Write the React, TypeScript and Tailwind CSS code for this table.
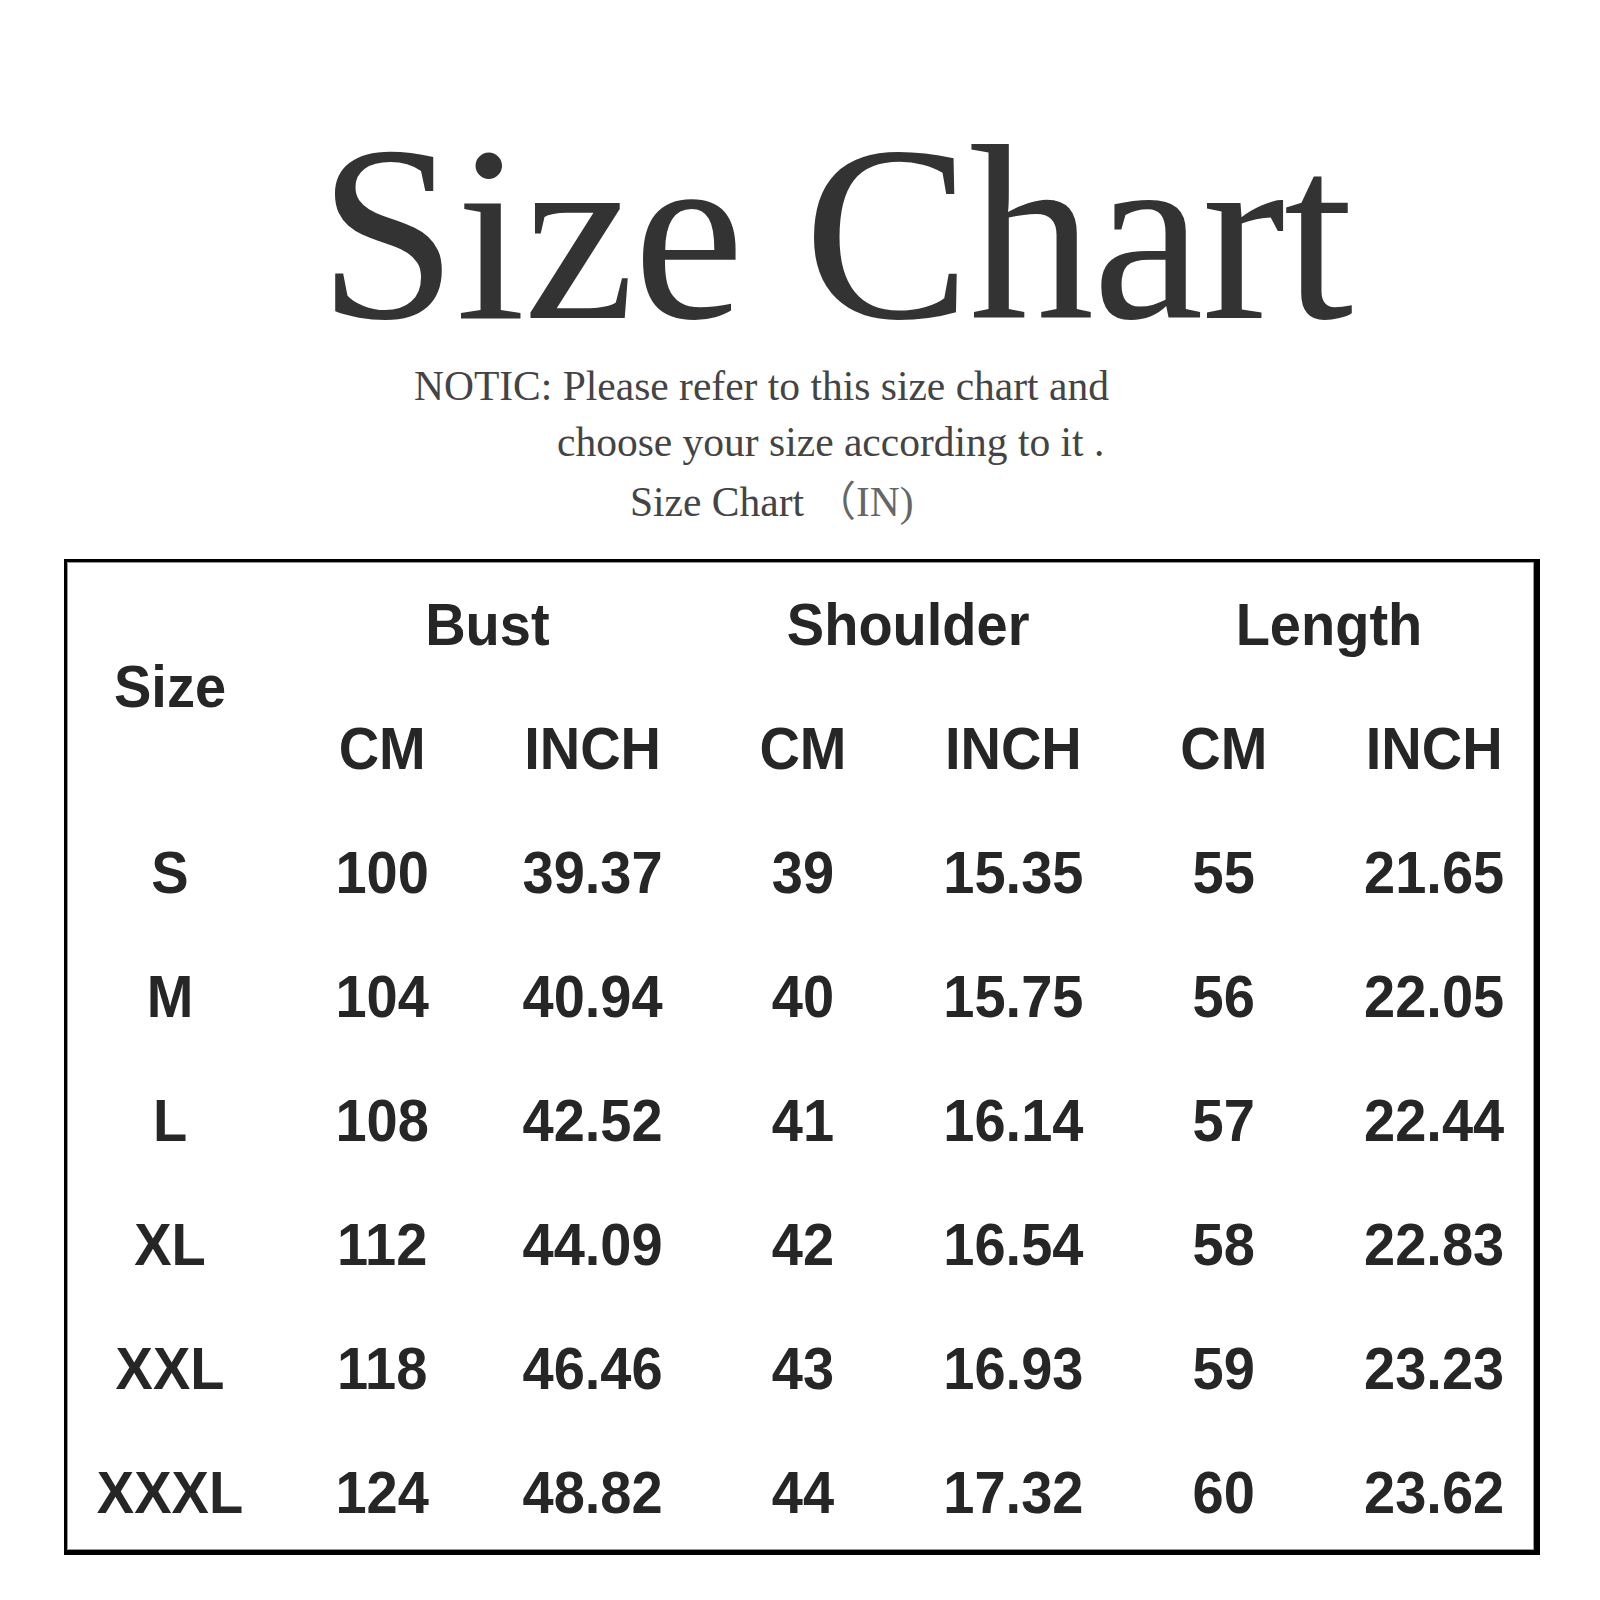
import React from 'react';

type Row = { size: string; values: string[] };

const rows: Row[] = [
  { size: 'S', values: ['100', '39.37', '39', '15.35', '55', '21.65'] },
  { size: 'M', values: ['104', '40.94', '40', '15.75', '56', '22.05'] },
  { size: 'L', values: ['108', '42.52', '41', '16.14', '57', '22.44'] },
  { size: 'XL', values: ['112', '44.09', '42', '16.54', '58', '22.83'] },
  { size: 'XXL', values: ['118', '46.46', '43', '16.93', '59', '23.23'] },
  { size: 'XXXL', values: ['124', '48.82', '44', '17.32', '60', '23.62'] },
];

const groups = ['Bust', 'Shoulder', 'Length'];

const serif = "font-['Liberation_Serif','Noto_Sans_CJK_SC',serif]";
const cell = 'flex items-center justify-center';

// taller-looking glyphs, as in the original chart image
const Txt: React.FC<{ children: React.ReactNode }> = ({ children }) => (
  <span className="inline-block scale-y-[1.06]">{children}</span>
);

const App: React.FC = () => {
  return (
    <div className="w-[1600px] h-[1600px] bg-white pt-[111px]">
      <h1
        className={`${serif} text-[250px] leading-[246px] tracking-[-1.5px] text-[#333333] text-center pl-[70px] font-normal`}
      >
        Size Chart
      </h1>

      <div className={`${serif} text-[41.5px] leading-[56px] text-[#444444]`}>
        <p className="pl-[414px] mt-[1px] whitespace-nowrap">NOTIC: Please refer to this size chart and</p>
        <p className="pl-[557px] whitespace-nowrap">choose your size according to it .</p>
        <p className="pl-[630px] mt-[4px] whitespace-nowrap">
          Size Chart <span className="text-[#666666]">（IN)</span>
        </p>
      </div>

      <div className="ml-[64px] mt-[29px] w-[1476px] h-[996px] border-l-[3px] border-t-[3px] border-r-[6px] border-b-[5px] border-black">
        <div className="h-full border border-[#9a9a9a]">
          <div className="grid grid-cols-[209px_repeat(6,210.4px)] grid-rows-[repeat(8,124px)] font-['Liberation_Sans',Arial,sans-serif] font-bold text-[56px] leading-none text-[#262626]">
            <div className={`${cell} row-span-2 pr-[5px]`}>
              <Txt>Size</Txt>
            </div>
            {groups.map(g => (
              <div key={g} className={`${cell} col-span-2`}>
                <Txt>{g}</Txt>
              </div>
            ))}
            {groups.map(g => (
              <React.Fragment key={g + '-units'}>
                <div className={cell}>
                  <Txt>CM</Txt>
                </div>
                <div className={cell}>
                  <Txt>INCH</Txt>
                </div>
              </React.Fragment>
            ))}
            {rows.map(row => (
              <React.Fragment key={row.size}>
                <div className={`${cell} pr-[5px]`}>
                  <Txt>{row.size}</Txt>
                </div>
                {row.values.map((v, i) => (
                  <div key={i} className={cell}>
                    <Txt>{v}</Txt>
                  </div>
                ))}
              </React.Fragment>
            ))}
          </div>
        </div>
      </div>
    </div>
  );
};

export default App;
